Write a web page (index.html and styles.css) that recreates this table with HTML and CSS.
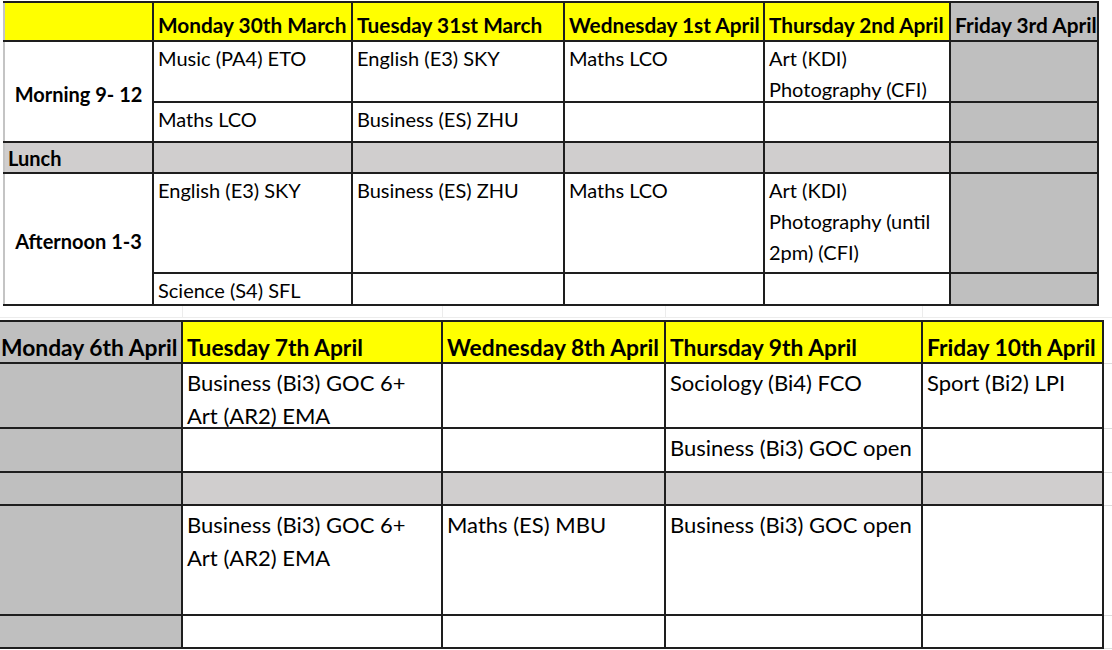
FILE: index.html
```html
<!DOCTYPE html>
<html lang="en">
<head>
<meta charset="utf-8">
<title>Timetable</title>
<link rel="stylesheet" href="styles.css">
</head>
<body>
<main class="sheet">
  <table class="tt week1">
    <colgroup>
      <col class="w1-label"><col class="w1-mon"><col class="w1-tue"><col class="w1-wed"><col class="w1-thu"><col class="w1-fri">
    </colgroup>
    <tr class="hdr h-w1">
      <th class="yellow label"></th>
      <th class="yellow">Monday 30th March</th>
      <th class="yellow">Tuesday 31st March</th>
      <th class="yellow">Wednesday 1st April</th>
      <th class="yellow">Thursday 2nd April</th>
      <th class="off">Friday 3rd April</th>
    </tr>
    <tr class="r1-ma">
      <th rowspan="2" class="label period">Morning 9- 12</th>
      <td><div class="tx">Music (PA4) ETO</div></td>
      <td><div class="tx">English (E3) SKY</div></td>
      <td><div class="tx">Maths LCO</div></td>
      <td><div class="tx">Art (KDI)<br>Photography (CFI)</div></td>
      <td class="off"></td>
    </tr>
    <tr class="r1-mb">
      <td><div class="tx">Maths LCO</div></td>
      <td><div class="tx">Business (ES) ZHU</div></td>
      <td></td>
      <td></td>
      <td class="off"></td>
    </tr>
    <tr class="r1-lunch">
      <th class="label lunch lunch-label"><div class="tx">Lunch</div></th>
      <td class="lunch"></td>
      <td class="lunch"></td>
      <td class="lunch"></td>
      <td class="lunch"></td>
      <td class="off"></td>
    </tr>
    <tr class="r1-aa">
      <th rowspan="2" class="label period">Afternoon 1-3</th>
      <td><div class="tx">English (E3) SKY</div></td>
      <td><div class="tx">Business (ES) ZHU</div></td>
      <td><div class="tx">Maths LCO</div></td>
      <td><div class="tx">Art (KDI)<br>Photography (until<br>2pm) (CFI)</div></td>
      <td class="off"></td>
    </tr>
    <tr class="r1-ab">
      <td><div class="tx">Science (S4) SFL</div></td>
      <td></td>
      <td></td>
      <td></td>
      <td class="off"></td>
    </tr>
  </table>

  <div class="gap-grid">
    <span class="g g1"></span><span class="g g2"></span><span class="g g3"></span><span class="g g4"></span><span class="g g5"></span>
  </div>

  <table class="tt week2">
    <colgroup>
      <col class="w2-mon"><col class="w2-tue"><col class="w2-wed"><col class="w2-thu"><col class="w2-fri"><col class="w2-spill">
    </colgroup>
    <tr class="hdr h-w2">
      <th class="off first">Monday 6th April</th>
      <th class="yellow">Tuesday 7th April</th>
      <th class="yellow">Wednesday 8th April</th>
      <th class="yellow">Thursday 9th April</th>
      <th class="yellow">Friday 10th April</th>
      <td class="spill"></td>
    </tr>
    <tr class="r2-1">
      <td class="off first"></td>
      <td><div class="tx">Business (Bi3) GOC 6+<br>Art (AR2) EMA</div></td>
      <td></td>
      <td><div class="tx">Sociology (Bi4) FCO</div></td>
      <td><div class="tx">Sport (Bi2) LPI</div></td>
      <td class="spill"></td>
    </tr>
    <tr class="r2-2">
      <td class="off first"></td>
      <td></td>
      <td></td>
      <td><div class="tx">Business (Bi3) GOC open</div></td>
      <td></td>
      <td class="spill"></td>
    </tr>
    <tr class="r2-lunch">
      <td class="off first"></td>
      <td class="lunch"></td>
      <td class="lunch"></td>
      <td class="lunch"></td>
      <td class="lunch"></td>
      <td class="spill"></td>
    </tr>
    <tr class="r2-4">
      <td class="off first"></td>
      <td><div class="tx">Business (Bi3) GOC 6+<br>Art (AR2) EMA</div></td>
      <td><div class="tx">Maths (ES) MBU</div></td>
      <td><div class="tx">Business (Bi3) GOC open</div></td>
      <td></td>
      <td class="spill"></td>
    </tr>
    <tr class="r2-5">
      <td class="off first"></td>
      <td></td>
      <td></td>
      <td></td>
      <td></td>
      <td class="spill"></td>
    </tr>
  </table>
</main>
</body>
</html>
```

FILE: styles.css
```css
html, body {
  margin: 0;
  padding: 0;
  background: #ffffff;
}

body {
  font-family: Lato, "Liberation Sans", sans-serif;
  color: #000000;
}

.sheet {
  display: flex;
  flex-direction: column;
  align-items: flex-start;
  padding-top: 1px;
}

.tt {
  border-collapse: collapse;
  table-layout: fixed;
}

.tt td,
.tt th {
  border: 2px solid #1e1e1e;
  padding: 0 4px;
  vertical-align: top;
  text-align: left;
  font-weight: 400;
  background: #ffffff;
  overflow: hidden;
  white-space: nowrap;
}

.tt .yellow { background: #ffff00; }
.tt .off { background: #bfbfbf; }
.tt .lunch { background: #d0cece; }

.tt .hdr th {
  font-weight: 700;
  vertical-align: bottom;
}

/* cell text may run up to the grid line, as in a sheet,
   without stretching the row */
.tx {
  margin-bottom: -14px;
}

/* ---------- week 1 ---------- */
.week1 {
  margin-left: 3px;
  width: 1094px;
  font-size: 20px;
  line-height: 31px;
}

.w1-label { width: 149px; }
.w1-mon { width: 199px; }
.w1-tue { width: 212px; }
.w1-wed { width: 200px; }
.w1-thu { width: 186px; }
.w1-fri { width: 148px; }

.h-w1 { height: 39px; }
.h-w1 th {
  padding-bottom: 2px;
  line-height: 26px;
  font-size: 20.8px;
}
.r1-ma { height: 61px; }
.r1-mb { height: 40px; }
.r1-lunch { height: 31px; }
.r1-aa { height: 100px; }
.r1-ab { height: 32px; }

.week1 td { padding-top: 1px; }

.week1 .label {
  border-left: 2px solid #c4c4c4;
}

.week1 .period {
  font-weight: 700;
  text-align: center;
  vertical-align: middle;
  padding-top: 4px;
  line-height: 26px;
}

.week1 .lunch-label {
  font-weight: 700;
  vertical-align: top;
  padding-left: 3px;
  padding-top: 0;
  line-height: 30px;
}

/* ---------- gap between tables (spreadsheet grid) ---------- */
.gap-grid {
  display: flex;
  height: 14px;
  width: 1112px;
}

.gap-grid .g {
  height: 11px;
  border-bottom: 1px solid #ececec;
  border-right: 1px solid #ececec;
}

.g1 { width: 182px; }
.g2 { width: 259px; }
.g3 { width: 222px; }
.g4 { width: 256px; }
.g5 { flex: 1; border-right: none !important; }

/* ---------- week 2 ---------- */
.week2 {
  width: 1113px;
  font-size: 22px;
  line-height: 33px;
}

.w2-mon { width: 182px; }
.w2-tue { width: 260px; }
.w2-wed { width: 223px; }
.w2-thu { width: 257px; }
.w2-fri { width: 181px; }
.w2-spill { width: 10px; }

.h-w2 { height: 42px; }
.h-w2 th {
  padding-bottom: 1px;
  line-height: 28px;
  font-size: 22.8px;
}
.r2-1 { height: 65px; }
.r2-2 { height: 44px; }
.r2-lunch { height: 33px; }
.r2-4 { height: 110px; }
.r2-5 { height: 33px; }

.week2 td { padding-top: 2px; }

.week2 .first {
  border-left: 0;
  padding-left: 1px;
}

.week2 .spill {
  background: transparent;
  border: 1px solid #dcdcdc;
  border-right: 0;
  padding: 0;
}

.week2 .hdr .spill {
  border-top: 0;
}
```
